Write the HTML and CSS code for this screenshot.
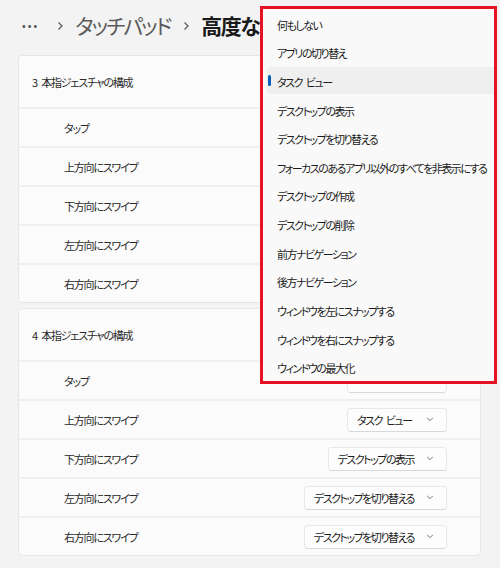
FILE: index.html
```html
<!DOCTYPE html>
<html lang="ja">
<head>
<meta charset="utf-8">
<link rel="stylesheet" href="styles.css">
</head>
<body>
<div class="page">
  <header class="crumbs">
    <span class="more">•••</span>
    <svg class="sep" width="8" height="10" viewBox="0 0 8 10"><path d="M2.5 1.5 L6 5 L2.5 8.5" fill="none" stroke="#5a5a5a" stroke-width="1.3"/></svg>
    <span class="crumb">タッチパッド</span>
    <svg class="sep" width="8" height="10" viewBox="0 0 8 10"><path d="M2.5 1.5 L6 5 L2.5 8.5" fill="none" stroke="#5a5a5a" stroke-width="1.3"/></svg>
    <span class="crumb current">高度なジェスチャ</span>
  </header>

  <section class="card">
    <div class="card-head">3&ensp;本指ジェスチャの構成</div>
    <div class="row"><span>タップ</span><button class="select covered"><span>検索</span><svg class="chev" width="8" height="5" viewBox="0 0 10 6"><path d="M1.5 1 L5 4.5 L8.5 1" fill="none" stroke="#606060" stroke-width="1.1"/></svg></button></div>
    <div class="row"><span>上方向にスワイプ</span><button class="select covered"><span>タスク&ensp;ビュー</span><svg class="chev" width="8" height="5" viewBox="0 0 10 6"><path d="M1.5 1 L5 4.5 L8.5 1" fill="none" stroke="#606060" stroke-width="1.1"/></svg></button></div>
    <div class="row"><span>下方向にスワイプ</span><button class="select covered"><span>デスクトップの表示</span><svg class="chev" width="8" height="5" viewBox="0 0 10 6"><path d="M1.5 1 L5 4.5 L8.5 1" fill="none" stroke="#606060" stroke-width="1.1"/></svg></button></div>
    <div class="row"><span>左方向にスワイプ</span><button class="select covered"><span>アプリの切り替え</span><svg class="chev" width="8" height="5" viewBox="0 0 10 6"><path d="M1.5 1 L5 4.5 L8.5 1" fill="none" stroke="#606060" stroke-width="1.1"/></svg></button></div>
    <div class="row"><span>右方向にスワイプ</span><button class="select covered"><span>アプリの切り替え</span><svg class="chev" width="8" height="5" viewBox="0 0 10 6"><path d="M1.5 1 L5 4.5 L8.5 1" fill="none" stroke="#606060" stroke-width="1.1"/></svg></button></div>
  </section>

  <section class="card">
    <div class="card-head">4&ensp;本指ジェスチャの構成</div>
    <div class="row"><span>タップ</span><button class="select covered"><span>タスク&ensp;ビュー</span><svg class="chev" width="8" height="5" viewBox="0 0 10 6"><path d="M1.5 1 L5 4.5 L8.5 1" fill="none" stroke="#606060" stroke-width="1.1"/></svg></button></div>
    <div class="row"><span>上方向にスワイプ</span><button class="select"><span>タスク&ensp;ビュー</span><svg class="chev" width="8" height="5" viewBox="0 0 10 6"><path d="M1.5 1 L5 4.5 L8.5 1" fill="none" stroke="#606060" stroke-width="1.1"/></svg></button></div>
    <div class="row"><span>下方向にスワイプ</span><button class="select"><span>デスクトップの表示</span><svg class="chev" width="8" height="5" viewBox="0 0 10 6"><path d="M1.5 1 L5 4.5 L8.5 1" fill="none" stroke="#606060" stroke-width="1.1"/></svg></button></div>
    <div class="row"><span>左方向にスワイプ</span><button class="select"><span>デスクトップを切り替える</span><svg class="chev" width="8" height="5" viewBox="0 0 10 6"><path d="M1.5 1 L5 4.5 L8.5 1" fill="none" stroke="#606060" stroke-width="1.1"/></svg></button></div>
    <div class="row"><span>右方向にスワイプ</span><button class="select"><span>デスクトップを切り替える</span><svg class="chev" width="8" height="5" viewBox="0 0 10 6"><path d="M1.5 1 L5 4.5 L8.5 1" fill="none" stroke="#606060" stroke-width="1.1"/></svg></button></div>
  </section>

  <ul class="menu">
    <li>何もしない</li>
    <li>アプリの切り替え</li>
    <li class="selected">タスク&ensp;ビュー</li>
    <li>デスクトップの表示</li>
    <li>デスクトップを切り替える</li>
    <li>フォーカスのあるアプリ以外のすべてを非表示にする</li>
    <li>デスクトップの作成</li>
    <li>デスクトップの削除</li>
    <li>前方ナビゲーション</li>
    <li>後方ナビゲーション</li>
    <li>ウィンドウを左にスナップする</li>
    <li>ウィンドウを右にスナップする</li>
    <li>ウィンドウの最大化</li>
  </ul>
</div>
</body>
</html>
```

FILE: styles.css
```css
html, body {
  margin: 0;
  padding: 0;
}
body {
  background: #f3f3f3;
  font-family: "Noto Sans CJK JP", "Noto Sans", sans-serif;
  font-feature-settings: "palt";
  color: #1b1b1b;
  width: 500px;
  height: 568px;
  overflow: hidden;
}
.page {
  position: relative;
  padding: 0 19px 0 18px;
}
.crumbs {
  height: 50px;
  width: 242px;
  overflow: hidden;
  display: flex;
  align-items: center;
  padding-left: 4px;
  box-sizing: border-box;
  font-size: 21px;
  white-space: nowrap;
}
.more {
  font-size: 11px;
  letter-spacing: 2px;
  color: #555;
  margin-right: 17px;
}
.sep {
  flex: none;
  margin: 2px 11px 0 0;
}
.crumb {
  flex: none;
  color: #5a5a5a;
  margin-right: 12px;
  letter-spacing: -2px;
}
.crumb.current {
  color: #1a1a1a;
  font-weight: 600;
  margin-right: 0;
  letter-spacing: -1.5px;
}
.card {
  background: #fbfbfb;
  border: 1px solid #e6e6e6;
  border-radius: 4px;
  margin-top: 5px;
  color: #2a2a2a;
}
.card-head {
  height: 51px;
  display: flex;
  align-items: center;
  padding-left: 13px;
  font-size: 11px;
  letter-spacing: -1.2px;
}
.row {
  height: 37px;
  border-top: 2px solid #efefef;
  display: flex;
  align-items: center;
  justify-content: space-between;
  padding: 0 33px 0 45px;
  font-size: 11px;
  letter-spacing: -1.2px;
}
.select {
  height: 24px;
  min-width: 100px;
  box-sizing: border-box;
  display: flex;
  align-items: center;
  justify-content: space-between;
  gap: 12px;
  padding: 0 12px 0 9px;
  background: #fdfdfd;
  border: 1px solid #e8e8e8;
  border-bottom-color: #d8d8d8;
  border-radius: 4px;
  font-family: inherit;
  font-feature-settings: "palt";
  font-size: 11px;
  letter-spacing: -1.5px;
  color: #1b1b1b;
}
.select.covered > span {
  visibility: hidden;
}
.chev {
  display: block;
  flex: none;
}
.menu {
  position: absolute;
  top: 6px;
  left: 260px;
  width: 231px;
  height: 372px;
  margin: 0;
  padding: 0;
  list-style: none;
  background: #f9f9f9;
  border: 3px solid #e81123;
  display: grid;
  grid-template-rows: repeat(13, 1fr);
  grid-template-columns: minmax(0, 1fr);
  overflow: hidden;
}
.menu li {
  position: relative;
  display: flex;
  align-items: center;
  min-width: 0;
  margin: 1px 0 1px 4px;
  padding: 3px 0 0 10px;
  font-size: 11px;
  letter-spacing: -1.5px;
  color: #1b1b1b;
  white-space: nowrap;
  border-radius: 4px 0 0 4px;
}
.menu li.selected {
  background: #efefef;
}
.menu li.selected::before {
  content: "";
  position: absolute;
  left: 1px;
  top: 8px;
  bottom: 8px;
  width: 3px;
  border-radius: 2px;
  background: #005fb8;
}
```
